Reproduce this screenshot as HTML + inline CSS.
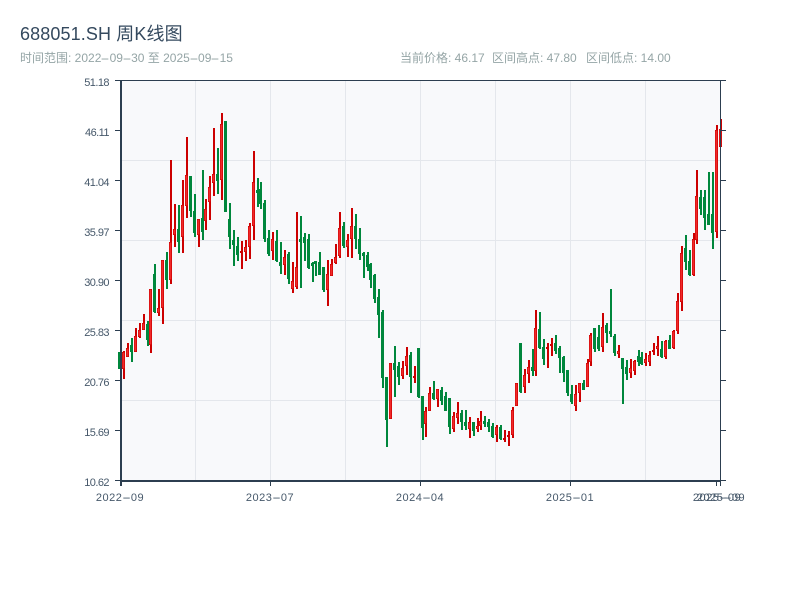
<!DOCTYPE html>
<html lang="zh"><head><meta charset="utf-8"><title>688051.SH 周K线图</title>
<style>
html,body{margin:0;padding:0;background:#fff;width:800px;height:600px;overflow:hidden}
body{font-family:"Liberation Sans","Noto Sans CJK SC",sans-serif;position:relative}
.t{position:absolute;white-space:nowrap;line-height:1}
.h{display:inline-block;transform:scaleX(2.3);margin:0 2.1px}
.title{left:20px;top:25px;font-size:18px;color:#34495e;letter-spacing:.12px}
.sub{top:52px;font-size:12px;color:#95a5a6}
.y{font-size:11px;color:#46586a;width:40px;left:69px;text-align:right;letter-spacing:-.55px}
.x{font-size:11px;color:#46586a;top:493px;width:70px;text-align:center;letter-spacing:.5px}
.x .h{margin:0 2.2px;transform:scaleX(2.4)}
svg{position:absolute;left:0;top:0}
</style></head><body>
<div class="t title">688051.SH 周K线图</div>
<div class="t sub" style="left:20px">时间范围: 2022<span class="h">-</span>09<span class="h">-</span>30 至 2025<span class="h">-</span>09<span class="h">-</span>15</div>
<div class="t sub" style="left:400px">当前价格: 46.17</div>
<div class="t sub" style="left:492px">区间高点: 47.80</div>
<div class="t sub" style="left:586px">区间低点: 14.00</div>
<svg id="c" width="800" height="600" xmlns="http://www.w3.org/2000/svg">
<rect x="121" y="81" width="600" height="400" fill="#f8f9fb"/>
<path d="M121 160.5H720M121 240.5H720M121 320.5H720M121 400.5H720M195.5 81V481M270.5 81V481M345.5 81V481M420.5 81V481M495.5 81V481M570.5 81V481M645.5 81V481" stroke="#e4e7ec" stroke-width="1" fill="none"/>
<g id="k"></g>
<path d="M115 80.5H726M720.5 81V481M115 130.5H120M115 180.5H120M115 230.5H120M115 280.5H120M115 330.5H120M115 380.5H120M115 430.5H120M115 480.5H120M721 130.5H726M721 180.5H726M721 230.5H726M721 280.5H726M721 330.5H726M721 380.5H726M721 430.5H726M721 480.5H726M270.5 482V486M420.5 482V486M570.5 482V486M716.5 482V486M720.5 482V486" stroke="#2c3e50" stroke-width="1" fill="none"/>
<path d="M121 81V486M120 481H721" stroke="#2c3e50" stroke-width="2" fill="none"/>
</svg>
<div class="t y" style="top:78px">51.18</div>
<div class="t y" style="top:128px">46.11</div>
<div class="t y" style="top:178px">41.04</div>
<div class="t y" style="top:228px">35.97</div>
<div class="t y" style="top:278px">30.90</div>
<div class="t y" style="top:328px">25.83</div>
<div class="t y" style="top:378px">20.76</div>
<div class="t y" style="top:428px">15.69</div>
<div class="t y" style="top:478px">10.62</div>
<div class="t x" style="left:85px">2022<span class="h">-</span>09</div>
<div class="t x" style="left:235px">2023<span class="h">-</span>07</div>
<div class="t x" style="left:385px">2024<span class="h">-</span>04</div>
<div class="t x" style="left:535px">2025<span class="h">-</span>01</div>
<div class="t x" style="left:682px">2025<span class="h">-</span>09</div>
<div class="t x" style="left:686px">2025<span class="h">-</span>09</div>
<script>
var D=[[0,352,369,352,369],[1,351,379,352,369],[1,343,357,348,357],[0,338,362,345,352],[1,328,352,336,352],[1,323,338,330,337],[1,314,330,323,330],[0,321,346,324,340],[1,289,353,289,345],[0,264,313,274,312],[1,289,316,308,313],[1,260,324,260,308],[0,252,289,260,280],[1,160,284,242,280],[1,204,247,229,235],[0,205,253,229,242],[1,180,253,205,237],[1,137,218,175,206],[0,176,217,176,211],[0,194,237,211,233],[1,219,247,219,235],[0,170,240,218,232],[1,199,230,209,221],[1,176,220,187,202],[1,128,196,174,183],[0,148,194,174,181],[1,113,200,124,180],[0,121,212,121,212],[0,203,249,219,237],[0,230,266,240,245],[0,237,261,246,255],[1,241,269,251,253],[1,240,261,247,252],[1,223,259,226,247],[1,151,240,182,226],[0,178,207,190,193],[0,182,209,189,204],[0,200,242,203,239],[0,230,256,238,254],[1,232,260,239,251],[0,230,262,241,261],[0,242,274,262,266],[1,250,275,257,265],[0,252,284,254,279],[1,262,293,281,289],[1,212,289,267,287],[0,216,288,239,242],[0,233,261,237,243],[0,234,269,239,268],[0,262,282,263,266],[0,261,276,261,264],[0,252,275,262,275],[0,267,292,267,290],[1,260,306,274,290],[1,259,276,264,276],[1,244,264,257,263],[1,212,258,228,256],[0,222,248,226,246],[1,234,257,240,247],[1,208,258,226,239],[0,214,249,226,239],[0,228,260,239,254],[0,252,278,253,256],[0,252,271,255,267],[0,263,288,264,280],[0,274,303,275,299],[0,289,338,297,315],[0,310,388,312,378],[0,377,447,377,420],[1,363,419,363,419],[0,346,397,363,370],[0,362,385,366,377],[1,361,379,368,376],[1,347,375,356,366],[0,352,393,355,377],[1,366,383,376,378],[0,348,398,348,397],[0,396,440,396,428],[1,407,437,411,424],[1,387,411,393,411],[0,381,400,393,399],[1,389,407,389,399],[0,387,405,390,401],[0,392,411,396,411],[0,398,434,398,427],[1,412,432,416,429],[1,402,424,413,418],[0,410,430,413,422],[0,410,430,422,426],[1,417,438,422,429],[0,422,436,422,431],[1,418,432,426,429],[1,411,430,421,426],[0,416,427,421,424],[0,419,432,422,427],[0,423,438,426,437],[1,425,442,427,435],[0,425,440,427,439],[1,430,442,438,440],[1,431,446,435,437],[1,407,438,410,435],[1,383,406,383,406],[0,343,393,343,392],[1,369,393,375,387],[1,360,383,367,374],[0,349,376,367,371],[1,310,376,328,371],[0,312,349,329,348],[0,339,365,347,359],[1,343,368,347,349],[1,338,356,344,346],[0,335,354,343,351],[0,346,373,348,358],[0,356,382,357,373],[0,370,396,370,393],[0,385,404,394,402],[1,385,411,394,406],[1,383,402,383,393],[0,380,390,383,390],[1,359,387,363,387],[1,333,366,335,362],[0,328,352,328,349],[0,325,351,337,349],[1,313,352,327,347],[0,323,343,325,333],[0,289,337,331,334],[0,334,356,336,353],[1,345,358,351,354],[0,358,404,358,369],[0,360,380,367,374],[1,359,378,368,373],[1,360,375,361,371],[0,350,366,356,362],[0,352,365,357,364],[1,353,366,359,363],[1,351,366,355,362],[1,343,355,350,352],[1,336,356,346,349],[0,341,358,349,357],[1,340,359,341,357],[0,335,349,340,349],[1,330,349,331,348],[1,293,334,301,331],[1,246,311,253,302],[0,235,270,248,262],[0,250,276,261,275],[1,233,276,239,275],[1,170,244,196,240],[0,190,215,197,209],[0,190,230,197,218],[0,172,225,214,225],[0,172,249,214,233],[1,125,238,130,232],[1,119,147,129,147]];
var s='';
for(var i=0;i<D.length;i++){var d=D[i],w=Math.round(120.07+3.928*i-1);
var dark=d[0]?'#cc0000':'#00873c';
s+='<rect x="'+w+'" y="'+d[1]+'" width="2" height="'+(d[2]-d[1])+'" fill="'+dark+'"/>';
s+='<rect x="'+(w-1)+'" y="'+d[3]+'" width="2.8" height="'+Math.max(d[4]-d[3],2)+'" fill="'+dark+'"/>';
if(d[0]&&d[4]-d[3]>2)s+='<rect x="'+(w-.5)+'" y="'+(d[3]+.6)+'" width="1.8" height="'+(d[4]-d[3]-1.2)+'" fill="#f02a2a"/>';}
document.getElementById('k').innerHTML=s;
</script>
</body></html>
